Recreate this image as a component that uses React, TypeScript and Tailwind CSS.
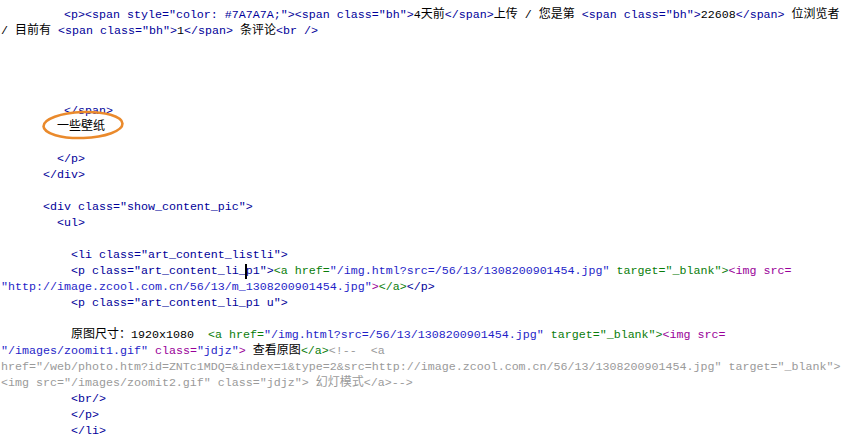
import React from "react";

const T = "text-[#000099]";
const V = "text-[#1f1fc8]";
const G = "text-[#0a7d0a]";
const P = "text-[#990099]";
const C = "text-[#9a9a9a]";
const K = "text-black";

type Seg = [string, string] | "cursor" | "ellipse";

function Runs({ text }: { text: string }) {
  const parts = text.split(/([\u3000-\u9fff\uff00-\uffef]+)/);
  return (
    <>
      {parts.map((p, i) =>
        /[\u3000-\u9fff\uff00-\uffef]/.test(p) ? (
          <span key={i} className="text-[12px]">
            {p}
          </span>
        ) : (
          <React.Fragment key={i}>{p}</React.Fragment>
        )
      )}
    </>
  );
}

const lines: { indent: number; segs: Seg[] }[] = [
  {
    indent: 9,
    segs: [
      ['<p><span style="color: #7A7A7A;"><span class="bh">', T],
      ["4天前", K],
      ["</span>", T],
      ["上传 / 您是第 ", K],
      ['<span class="bh">', T],
      ["22608", K],
      ["</span>", T],
      [" 位浏览者", K],
    ],
  },
  {
    indent: 0,
    segs: [
      ["/ 目前有 ", K],
      ['<span class="bh">', T],
      ["1", K],
      ["</span>", T],
      [" 条评论", K],
      ["<br />", T],
    ],
  },
  { indent: 0, segs: [] },
  { indent: 0, segs: [] },
  { indent: 0, segs: [] },
  { indent: 0, segs: [] },
  { indent: 9, segs: [["</span>", T]] },
  { indent: 8, segs: ["ellipse"] },
  { indent: 0, segs: [] },
  { indent: 8, segs: [["</p>", T]] },
  { indent: 6, segs: [["</div>", T]] },
  { indent: 0, segs: [] },
  { indent: 6, segs: [['<div class="show_content_pic">', T]] },
  { indent: 8, segs: [["<ul>", T]] },
  { indent: 0, segs: [] },
  { indent: 10, segs: [['<li class="art_content_listli">', T]] },
  {
    indent: 10,
    segs: [
      ['<p class="art_content_li_', T],
      "cursor",
      ['p1">', T],
      ["<a href=", G],
      ['"/img.html?src=/56/13/1308200901454.jpg"', V],
      [' target="_blank">', G],
      ["<img src=", P],
    ],
  },
  {
    indent: 0,
    segs: [
      ['"http://image.zcool.com.cn/56/13/m_1308200901454.jpg"', V],
      [">", P],
      ["</a>", G],
      ["</p>", T],
    ],
  },
  { indent: 10, segs: [['<p class="art_content_li_p1 u">', T]] },
  { indent: 0, segs: [] },
  {
    indent: 10,
    segs: [
      ["原图尺寸：1920x1080  ", K],
      ["<a href=", G],
      ['"/img.html?src=/56/13/1308200901454.jpg"', V],
      [' target="_blank">', G],
      ["<img src=", P],
    ],
  },
  {
    indent: 0,
    segs: [
      ['"/images/zoomit1.gif"', V],
      [" class=", P],
      ['"jdjz"', V],
      [">", P],
      [" 查看原图", K],
      ["</a>", G],
      ["<!--  <a", C],
    ],
  },
  {
    indent: 0,
    segs: [
      [
        'href="/web/photo.htm?id=ZNTc1MDQ=&index=1&type=2&src=http://image.zcool.com.cn/56/13/1308200901454.jpg" target="_blank">',
        C,
      ],
    ],
  },
  {
    indent: 0,
    segs: [['<img src="/images/zoomit2.gif" class="jdjz"> 幻灯模式</a>-->', C]],
  },
  { indent: 10, segs: [["<br/>", T]] },
  { indent: 10, segs: [["</p>", T]] },
  { indent: 10, segs: [["</li>", T]] },
];

export default function App() {
  return (
    <div
      className="w-[849px] h-[447px] bg-white overflow-hidden pt-[7px] pl-[1px] text-[11.67px]"
      style={{ fontFamily: '"Liberation Mono", "Noto Sans CJK SC", monospace' }}
    >
      {lines.map((ln, i) => (
        <div key={i} className="h-[16px] leading-[16px] whitespace-pre">
          {" ".repeat(ln.indent)}
          {ln.segs.map((s, j) => {
            if (s === "cursor") {
              return (
                <span key={j} className="relative inline-block w-0 h-[16px] align-top">
                  <span className="absolute left-[-1px] top-[1px] w-[2px] h-[15px] bg-black" />
                </span>
              );
            }
            if (s === "ellipse") {
              return (
                <span key={j} className="relative inline-block h-[16px] align-top text-black">
                  <Runs text="一些壁纸" />
                  <svg
                    className="absolute left-[-16px] top-[-10px]"
                    width="84"
                    height="32"
                    viewBox="0 0 84 32"
                  >
                    <ellipse
                      cx="42"
                      cy="16"
                      rx="39.5"
                      ry="13"
                      fill="none"
                      stroke="#ea8a2c"
                      strokeWidth="2.6"
                      transform="rotate(-2 42 16)"
                    />
                  </svg>
                </span>
              );
            }
            return (
              <span key={j} className={s[1]}>
                <Runs text={s[0]} />
              </span>
            );
          })}
        </div>
      ))}
    </div>
  );
}
